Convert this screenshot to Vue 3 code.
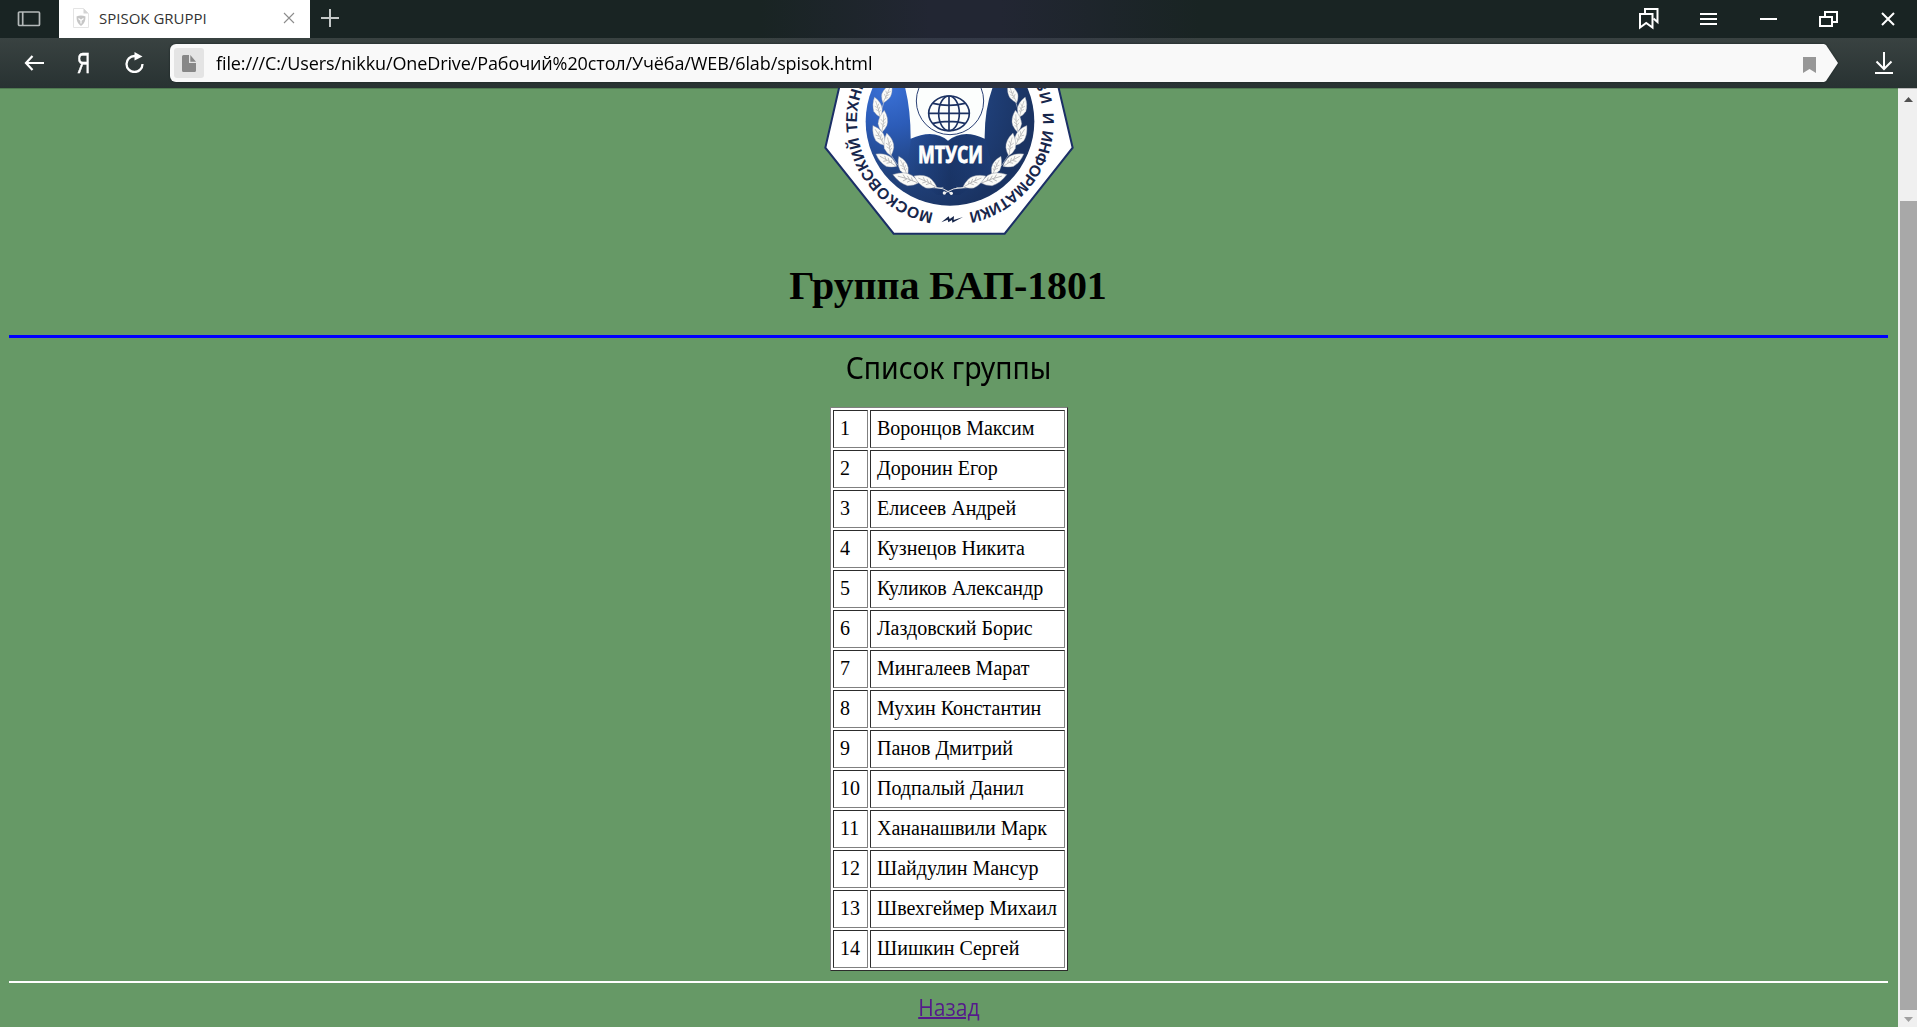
<script setup>
const students = [
  'Воронцов Максим',
  'Доронин Егор',
  'Елисеев Андрей',
  'Кузнецов Никита',
  'Куликов Александр',
  'Лаздовский Борис',
  'Мингалеев Марат',
  'Мухин Константин',
  'Панов Дмитрий',
  'Подпалый Данил',
  'Хананашвили Марк',
  'Шайдулин Мансур',
  'Швехгеймер Михаил',
  'Шишкин Сергей',
]

// Laurel leaves of the left branch: centre, rotation and scale
const leaves = [
  [231, 40, 28, 1],
  [202, 82, -12, 1],
  [219, 124, 10, 1.05],
  [206, 167, -26, 1.1],
  [236, 194, -6, 1.1],
  [229, 241, -55, 1.15],
  [279, 258, -20, 1],
  [288, 297, -68, 1.3],
  [346, 305, -60, 1.2],
]
</script>

<template>
  <div class="browser">
    <div class="tabbar">
      <div class="panel-btn">
        <svg width="24" height="16" viewBox="0 0 24 16" fill="none" stroke="#b4b9b9" stroke-width="1.7">
          <rect x="1.500" y="1" width="21" height="13.5" rx="1" /><path d="M5.700 1v13.500" />
        </svg>
      </div>
      <div class="tab">
        <svg class="favicon" width="16" height="20" viewBox="0 0 16 20">
          <path d="M.5 .5h10l5 5v14H.5z" fill="#fff" stroke="#e4e4e4" />
          <path d="M10.500 .5v5h5z" fill="#d4d4d4" />
          <path d="M3.500 8.500q4.500-2 9 0q0 7-4.500 9.500q-4.500-2.500-4.500-9.500z" fill="#c6c6c6" />
          <path d="M8 12.500v3M8 12.500l-2.500-2M8 12.500l2.500-2" stroke="#fff" stroke-width="1.200" />
        </svg>
        <span class="tab-title">SPISOK GRUPPI</span>
        <svg class="tab-close" width="12" height="12" viewBox="0 0 12 12" stroke="#8c8c8c" stroke-width="1.1">
          <path d="M1 1l10 10M11 1L1 11" />
        </svg>
      </div>
      <svg class="plus" width="18" height="18" viewBox="0 0 18 18" stroke="#c4c8c8" stroke-width="2">
        <path d="M9 0v18M0 9h18" />
      </svg>
      <div class="window-btns">
        <svg width="20" height="22" viewBox="0 0 20 22" fill="none" stroke="#fff" stroke-width="2">
          <path d="M1 6h12.500v13.500L7.200 15 1 19.500z" /><path d="M6 5V1h12.500v13l-4-3.500" />
        </svg>
        <svg width="17" height="12" viewBox="0 0 17 12" stroke="#fff" stroke-width="2">
          <path d="M0 1h17M0 6h17M0 11h17" />
        </svg>
        <svg width="17" height="2" viewBox="0 0 17 2"><path d="M0 0h17v2H0z" fill="#fff" /></svg>
        <svg width="19" height="16" viewBox="0 0 19 16" fill="none" stroke="#fff" stroke-width="2">
          <path d="M1 6h12v9H1zM6 6V1h12v10h-5" />
        </svg>
        <svg width="14" height="14" viewBox="0 0 14 14" stroke="#fff" stroke-width="2">
          <path d="M1 1l12 12M13 1L1 13" />
        </svg>
      </div>
    </div>

    <div class="toolbar">
      <svg class="back" width="20" height="16" viewBox="0 0 20 16" fill="none" stroke="#fff" stroke-width="2.2">
        <path d="M2 8H20M8.500 1L2 8l6.500 7" />
      </svg>
      <span class="ya">Я</span>
      <svg class="reload" width="20" height="21" viewBox="0 0 20 21">
        <path d="M11 4H9.500A8 8 0 1 0 17.500 12" fill="none" stroke="#fff" stroke-width="2.300" />
        <path d="M9.500 0v8.500L17.500 4.500z" fill="#fff" />
      </svg>
      <div class="address">
        <div class="address-inner">
          <div class="file-badge">
            <svg width="14" height="17" viewBox="0 0 14 17" fill="#878787">
              <path d="M1.500 0H7v8h7v7.500q0 1.500-1.500 1.500h-11Q0 17 0 15.500v-14Q0 0 1.500 0z" /><path d="M8.300 0L14 6.700H8.300z" />
            </svg>
          </div>
          <span class="url">file:///C:/Users/nikku/OneDrive/Рабочий%20стол/Учёба/WEB/6lab/spisok.html</span>
          <svg class="bookmark" width="13" height="16" viewBox="0 0 13 16">
            <path d="M0 0h13v16l-6.500-4L0 16z" fill="#979797" />
          </svg>
        </div>
      </div>
      <svg class="download" width="18" height="22" viewBox="0 0 18 22" fill="none" stroke="#fff" stroke-width="2">
        <path d="M9 0v17M1.500 9.500L9 17l7.500-7.500M0 21h18" />
      </svg>
    </div>

    <div class="viewport">
      <main class="page">
        <svg class="emblem" width="280" height="157" viewBox="0 24 840 471">
          <defs>
            <radialGradient id="disc" gradientUnits="userSpaceOnUse" cx="235" cy="20" r="430">
              <stop offset="0" stop-color="#3b72d8" />
              <stop offset="0.28" stop-color="#2c5cb8" />
              <stop offset="0.6" stop-color="#21437f" />
              <stop offset="1" stop-color="#1a3362" />
            </radialGradient>
            <linearGradient id="book" x1="0" x2="1">
              <stop offset="0" stop-color="#23498f" />
              <stop offset="0.5" stop-color="#152c59" />
              <stop offset="1" stop-color="#1f4180" />
            </linearGradient>
            <path id="ring" d="M420 -155A279 279 0 0 1 420 403A279 279 0 0 1 420 -155" />
            <g id="branch">
              <path d="M245 24Q195 90 218 170Q250 270 335 312Q375 330 400 322" fill="none" stroke="#c9ced8" stroke-width="2" />
              <g v-for="(l, i) in leaves" :key="i" :transform="`translate(${l[0]} ${l[1]}) rotate(${l[2]}) scale(${l[3]})`">
                <path d="M-2 -32Q17 -10 13 10Q9 24 3 31Q-8 23 -13 9Q-15 -11 -2 -32z" fill="#fbfbf8" stroke="#8d93a3" stroke-width="1" />
                <path d="M-1 -20Q3 2 2 28M1 -2l6-8M2 8l6-8M2 16l6-6M1 2l-8-7M2 12l-8-7" fill="none" stroke="#a3a4a6" stroke-width="1.600" />
              </g>
            </g>
          </defs>
          <path d="M88 20L46 203L251 461H584L788 203L745 20z" fill="#fff" stroke="#1b2f66" stroke-width="6" />
          <circle cx="420" cy="124" r="253" fill="url(#disc)" />
          <path d="M303 176Q373 148 414 184Q462 148 525 176L550 270L450 345H380L290 270z" fill="url(#book)" opacity="0.5" />
          <path d="M279 0Q302 75 302 176Q371 145 414 182Q460 145 524 176Q523 75 557 0z" fill="#fcfefd" />
          <circle cx="420" cy="63" r="101" fill="none" stroke="#2c4276" stroke-width="3" />
          <g fill="none" stroke="#1c3263" stroke-width="5">
            <ellipse cx="417" cy="100" rx="61" ry="52" />
            <ellipse cx="417" cy="100" rx="31" ry="52" />
            <path d="M417 48V152M356 100H478M369 70Q417 82 465 70M369 130Q417 118 465 130" />
          </g>
          <text x="324" y="250" class="acronym" textLength="195" lengthAdjust="spacingAndGlyphs">МТУСИ</text>
          <use href="#branch" />
          <use href="#branch" transform="translate(839 0) scale(-1 1)" />
          <path d="M375 322Q398 322 425 340M464 322Q430 322 402 340" fill="none" stroke="#e4e4e4" stroke-width="3" />
          <circle cx="403" cy="339" r="5" fill="#f2f2f2" /><circle cx="424" cy="340" r="5" fill="#f2f2f2" />
          <g class="ring-text">
            <text><textPath href="#ring" startOffset="212" textLength="175">СВЯЗИ</textPath></text>
            <text><textPath href="#ring" startOffset="413">И</textPath></text>
            <text><textPath href="#ring" startOffset="464" textLength="356">ИНФОРМАТИКИ</textPath></text>
            <text><textPath href="#ring" startOffset="926" textLength="341">МОСКОВСКИЙ</textPath></text>
            <text><textPath href="#ring" startOffset="1282" textLength="160">ТЕХНИ</textPath></text>
          </g>
          <path d="M394 427l22-18 3 8 13-9-1 12 28-9-32 17-1-8-11 7-2-8z" fill="#17264b" />
        </svg>
        <h1>Группа БАП-1801</h1>
        <hr class="rule-blue">
        <p class="subtitle">Список группы</p>
        <table>
          <tbody>
            <tr v-for="(name, i) in students" :key="name">
              <td class="num">{{ i + 1 }}</td>
              <td class="name">{{ name }}</td>
            </tr>
          </tbody>
        </table>
        <hr class="rule-white">
        <p class="back-link"><a href="#">Назад</a></p>
      </main>
      <div class="scrollbar">
        <svg width="9" height="5" viewBox="0 0 9 5"><path d="M0 5L4.500 0 9 5z" fill="#505050" /></svg>
        <div class="thumb"></div>
        <svg width="9" height="5" viewBox="0 0 9 5"><path d="M0 0L4.500 5 9 0z" fill="#a0a0a0" /></svg>
      </div>
    </div>
  </div>
</template>

<style>
html, body {
  margin: 0;
  overflow: hidden;
}
</style>

<style scoped>
.browser {
  display: flex;
  flex-direction: column;
  width: 1917px;
  height: 1027px;
  background: #669966;
  overflow: hidden;
}
svg {
  display: block;
  flex: none;
}
.tabbar {
  display: flex;
  align-items: center;
  height: 38px;
  flex: none;
  background: linear-gradient(90deg, #192423 0 760px, #222633 930px 1000px, #192423 1200px);
}
.panel-btn {
  width: 59px;
  box-sizing: border-box;
  padding-left: 17px;
}
.tab {
  display: flex;
  align-items: center;
  box-sizing: border-box;
  width: 251px;
  height: 38px;
  padding: 0 15px 2px 14px;
  background: #fff;
}
.tab-title {
  margin-left: 10px;
  font: 400 15px/20px "Open Sans", "Noto Sans", sans-serif;
  color: #333;
  white-space: nowrap;
}
.tab-close {
  margin-left: auto;
}
.plus {
  margin-left: 11px;
  margin-bottom: 2px;
}
.window-btns {
  display: flex;
  align-items: center;
  margin-left: auto;
  margin-right: 22px;
  margin-bottom: 1px;
}
.window-btns svg:nth-child(2) { margin-left: 41px; }
.window-btns svg:nth-child(3) { margin-left: 43px; }
.window-btns svg:nth-child(4) { margin-left: 42px; }
.window-btns svg:nth-child(5) { margin-left: 43px; }
.toolbar {
  display: flex;
  align-items: center;
  height: 50px;
  flex: none;
  background:
    linear-gradient(90deg, transparent 760px, rgba(48, 50, 75, 0.55) 930px 1000px, transparent 1200px),
    linear-gradient(#394241, #283232);
}
.back {
  margin-left: 24px;
}
.ya {
  margin-left: 33px;
  width: 14px;
  font: 400 29px/30px "Liberation Sans", sans-serif;
  -webkit-text-stroke: 0.5px #fff;
  transform: scaleX(0.62);
  transform-origin: left;
  color: #fff;
}
.reload {
  margin-left: 34px;
  margin-bottom: 1px;
}
.address {
  margin-left: 25px;
  filter: drop-shadow(0 0 1px #1b2424);
}
.address-inner {
  display: flex;
  align-items: center;
  box-sizing: border-box;
  width: 1668px;
  height: 38px;
  padding: 0 22px 0 4px;
  border-radius: 6px 0 0 6px;
  background: #f9f9f9;
  clip-path: polygon(0 0, 1654px 0, 1656px 1px, 1668px 19px, 1656px 37px, 1654px 38px, 0 38px);
}
.file-badge {
  display: flex;
  align-items: center;
  justify-content: center;
  width: 30px;
  height: 30px;
  border-radius: 3px;
  background: #e4e4e4;
}
.url {
  margin: 0 0 1px 12px;
  font: 400 18px/26px "Open Sans", "Noto Sans", sans-serif;
  letter-spacing: -0.11px;
  color: #000;
  white-space: nowrap;
}
.bookmark {
  margin: 3px 0 0 auto;
}
.download {
  margin-left: 37px;
}
.viewport {
  display: flex;
  height: 939px;
  background: #669966;
}
.page {
  width: 1898px;
  display: flex;
  flex-direction: column;
  align-items: center;
  box-shadow: inset 0 1px 0 #4f7a51;
}
.emblem {
  margin-left: 2px;
}
.acronym {
  font: 700 72px "Open Sans", sans-serif;
  fill: #fff;
  stroke: #fff;
  stroke-width: 2.5px;
}
.ring-text {
  font: 700 47px "Liberation Sans", sans-serif;
  fill: #17264b;
}
h1 {
  margin: 18px 2px 0 0;
  font: 700 40px/46px "Liberation Serif", serif;
  letter-spacing: -0.1px;
  color: #000;
}
hr {
  width: 1879px;
  margin: 0 1px 0 0;
  border: 0;
  flex: none;
}
.rule-blue {
  height: 3px;
  margin-top: 26px;
  background: #00f;
}
.subtitle {
  margin: 10px 2px 0 0;
  height: 37px;
  font: 400 30px/40px "Noto Sans", sans-serif;
  transform: scaleX(0.948);
  color: #000;
}
table {
  width: 238px;
  height: 564px;
  margin-top: 22px;
  border: 1px solid;
  border-color: #808080 #2c2c2c #2c2c2c #808080;
  border-collapse: separate;
  border-spacing: 2px;
  background: #fff;
  font: 400 20px/22px "Liberation Serif", serif;
  color: #000;
}
td {
  box-sizing: border-box;
  height: 38px;
  padding: 0 6px 2px;
  border: 1px solid;
  border-color: #2c2c2c #808080 #808080 #2c2c2c;
  white-space: nowrap;
}
.num {
  width: 35px;
}
.name {
  width: 195px;
}
.rule-white {
  height: 2px;
  margin-top: 10px;
  background: #fff;
}
.back-link {
  margin: 8px 1px 0 0;
  font: 400 24px/32px "Open Sans", "Noto Sans", sans-serif;
  transform: scaleX(0.88);
}
.back-link a {
  color: #551a8b;
  text-decoration: underline;
  text-decoration-thickness: 2px;
}
.scrollbar {
  display: flex;
  flex-direction: column;
  align-items: center;
  width: 19px;
  box-sizing: border-box;
  padding: 9px 0 0 2px;
  background: #f0f0f0;
  box-shadow: inset 0 1px 0 #bbb;
}
.thumb {
  width: 17px;
  height: 809px;
  margin: 99px 0 7px;
  background: #a8a8a8;
}
</style>
